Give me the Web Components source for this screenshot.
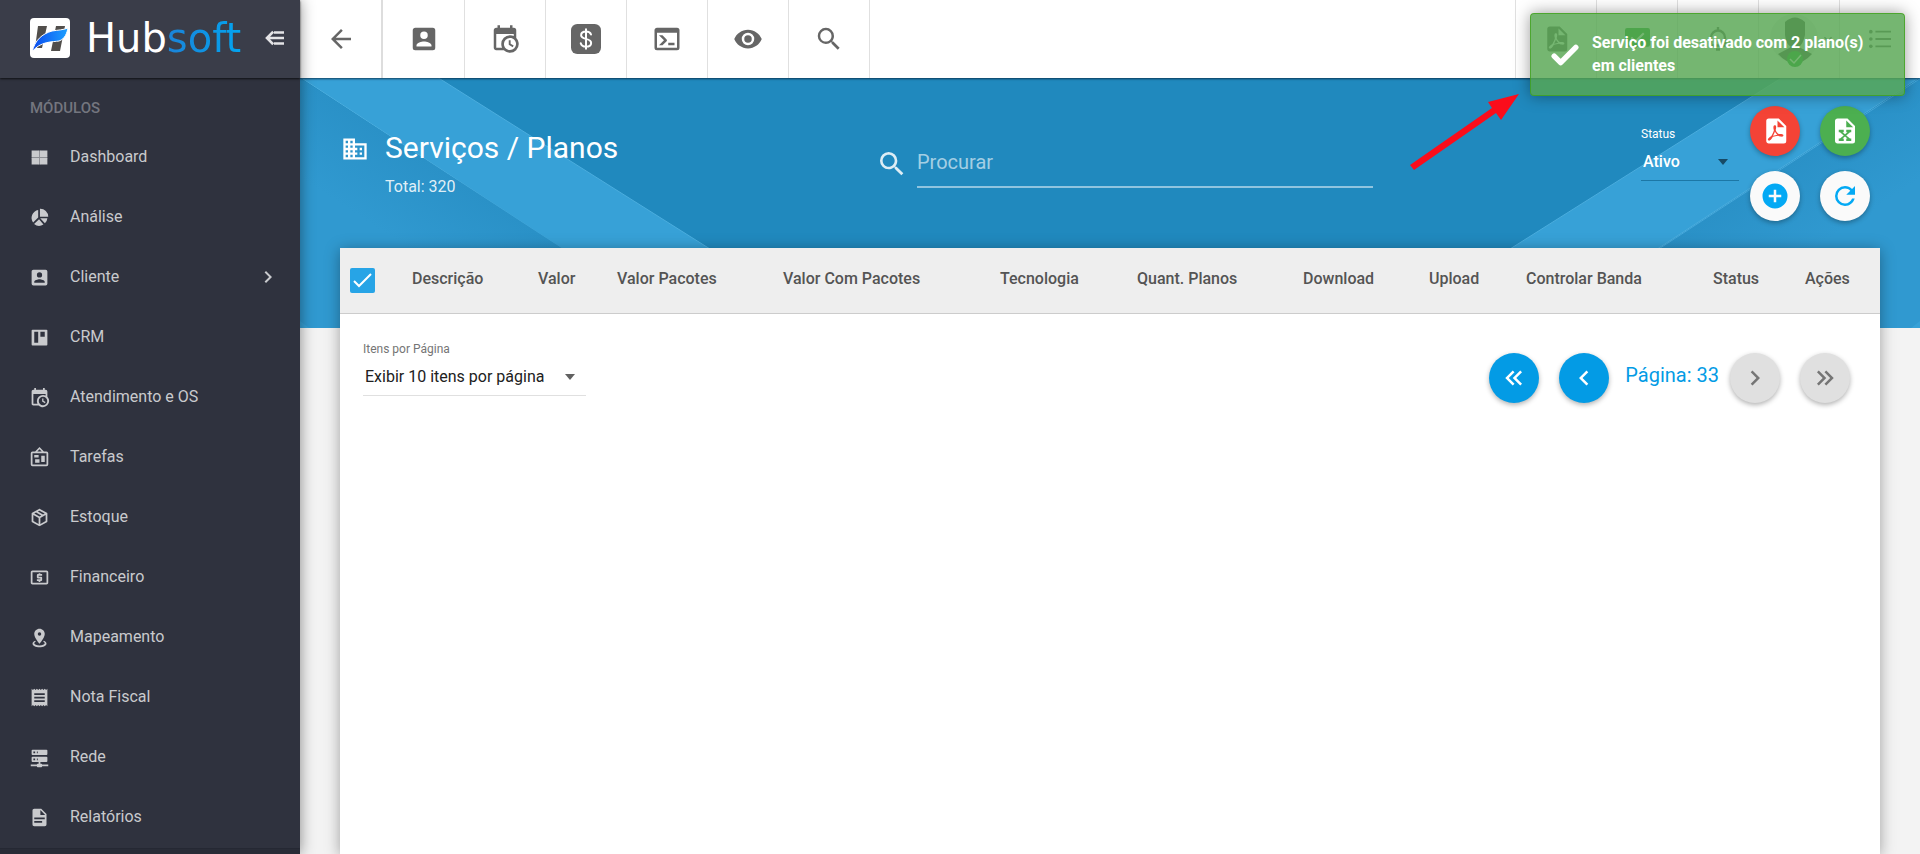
<!DOCTYPE html>
<html lang="pt-BR">
<head>
<meta charset="utf-8">
<title>Hubsoft - Serviços / Planos</title>
<style>
html, body { margin: 0; height: 100%; }
body { font-family: Roboto, "Liberation Sans", sans-serif; font-size: 16px; line-height: 24px; background: #f3f3f3; color: #212121; overflow: hidden; }
</style>
</head>
<body>
<hs-app></hs-app>
<script>
const ICONS = {
  grid: '<path d="M3 4h8.500v7.500H3zM12.500 4H21v7.500h-8.500zM3 12.500h8.500V20H3zM12.500 12.500H21V20h-8.500z"/><path opacity=".6" d="M11 4h2v16h-2zM3 11h18v2H3z"/>',
  pie: '<path d="M10.500 3.500V12l-5.800 5.800A9 9 0 0 1 10.500 3.500zM12.500 2A9 9 0 0 1 22 11h-9.500zM12.800 12.800H21a9 9 0 0 1-2.800 5.800zM11.500 14l5 6a9 9 0 0 1-10.700-.6z"/>',
  account: '<path d="M6,17C6,15 10,13.9 12,13.9C14,13.9 18,15 18,17V18H6M15,9A3,3 0 0,1 12,12A3,3 0 0,1 9,9A3,3 0 0,1 12,6A3,3 0 0,1 15,9M3,5V19A2,2 0 0,0 5,21H19A2,2 0 0,0 21,19V5A2,2 0 0,0 19,3H5C3.89,3 3,3.9 3,5Z"/>',
  board: '<path fill-rule="evenodd" d="M4 3h16a1 1 0 0 1 1 1v16a1 1 0 0 1-1 1H4a1 1 0 0 1-1-1V4a1 1 0 0 1 1-1zM6 5.500v12.500h4.500V5.500zM13 5.500V11h5V5.500z"/>',
  calendar: '<path d="M15,13H16.5V15.82L18.94,17.23L18.19,18.53L15,16.69V13M19,8H5V19H9.67C9.24,18.09 9,17.07 9,16A7,7 0 0,1 16,9C17.07,9 18.09,9.24 19,9.67V8M5,21C3.89,21 3,20.1 3,19V5C3,3.89 3.89,3 5,3H6V1H8V3H16V1H18V3H19A2,2 0 0,1 21,5V11.1C22.24,12.36 23,14.09 23,16A7,7 0 0,1 16,23C14.09,23 12.36,22.24 11.1,21H5M16,11.15A4.85,4.85 0 0,0 11.15,16C11.15,18.68 13.32,20.85 16,20.85A4.85,4.85 0 0,0 20.85,16C20.85,13.32 18.68,11.15 16,11.15Z"/>',
  bulletin: '<path d="M12.04,2.5L9.53,5H14.53L12.04,2.5M4,7V20H20V7H4M12,0L17,5V5H20A2,2 0 0,1 22,7V20A2,2 0 0,1 20,22H4A2,2 0 0,1 2,20V7A2,2 0 0,1 4,5H7V5L12,0M7,18V14H12V18H7M14,17V10H18V17H14M6,12V9H11V12H6Z"/>',
  box: '<path d="M21,16.5C21,16.88 20.79,17.21 20.47,17.38L12.57,21.82C12.41,21.94 12.21,22 12,22C11.79,22 11.59,21.94 11.43,21.82L3.53,17.38C3.21,17.21 3,16.88 3,16.5V7.5C3,7.12 3.21,6.79 3.53,6.62L11.43,2.18C11.59,2.06 11.79,2 12,2C12.21,2 12.41,2.06 12.57,2.18L20.47,6.62C20.79,6.79 21,7.12 21,7.5V16.5M12,4.15L10.11,5.22L16,8.61L17.96,7.5L12,4.15M6.04,7.5L12,10.85L13.96,9.75L8.08,6.35L6.04,7.5M5,15.91L11,19.29V12.58L5,9.21V15.91M19,15.91V9.21L13,12.58V19.29L19,15.91Z"/>',
  atm: '<path d="M11 17h2v-1h1c.55 0 1-.45 1-1v-3c0-.55-.45-1-1-1h-3v-1h4V8h-2V7h-2v1h-1c-.55 0-1 .45-1 1v3c0 .55.45 1 1 1h3v1H9v2h2v1zM20 4H4c-1.110 0-2 .89-2 2v12c0 1.110.89 2 2 2h16c1.110 0 2-.89 2-2V6c0-1.110-.89-2-2-2zm0 14H4V6h16v12z"/>',
  marker: '<path d="M12,2C15.31,2 18,4.66 18,7.95C18,12.41 12,19 12,19C12,19 6,12.41 6,7.95C6,4.66 8.69,2 12,2M12,6A2,2 0 0,0 10,8A2,2 0 0,0 12,10A2,2 0 0,0 14,8A2,2 0 0,0 12,6M20,19C20,21.21 16.42,23 12,23C7.58,23 4,21.21 4,19C4,17.71 5.22,16.56 7.11,15.83L7.75,16.74C6.67,17.19 6,17.81 6,18.5C6,19.88 8.69,21 12,21C15.31,21 18,19.88 18,18.5C18,17.81 17.33,17.19 16.25,16.74L16.89,15.83C18.78,16.56 20,17.71 20,19Z"/>',
  receipt: '<path d="M18 17H6v-2h12v2zm0-4H6v-2h12v2zm0-4H6V7h12v2zM3 22l1.500-1.500L6 22l1.500-1.500L9 22l1.500-1.500L12 22l1.500-1.500L15 22l1.500-1.500L18 22l1.500-1.500L21 22V2l-1.500 1.500L18 2l-1.500 1.500L15 2l-1.500 1.500L12 2l-1.500 1.500L9 2 7.500 3.500 6 2 4.500 3.500 3 2v20z"/>',
  server: '<path d="M13,19H14A1,1 0 0,1 15,20H22V22H15A1,1 0 0,1 14,23H10A1,1 0 0,1 9,22H2V20H9A1,1 0 0,1 10,19H11V17H4A1,1 0 0,1 3,16V12A1,1 0 0,1 4,11H20A1,1 0 0,1 21,12V16A1,1 0 0,1 20,17H13V19M4,3H20A1,1 0 0,1 21,4V8A1,1 0 0,1 20,9H4A1,1 0 0,1 3,8V4A1,1 0 0,1 4,3M9,7H10V5H9V7M9,15H10V13H9V15M5,5V7H7V5H5M5,13V15H7V13H5Z"/>',
  document: '<path d="M13,9H18.5L13,3.5V9M6,2H14L20,8V20A2,2 0 0,1 18,22H6C4.89,22 4,21.1 4,20V4C4,2.89 4.89,2 6,2M15,18V16H6V18H15M18,14V12H6V14H18Z"/>',
  pdf: '<path d="M14,9H19.5L14,3.5V9M7,2H15L21,8V20A2,2 0 0,1 19,22H7C5.89,22 5,21.1 5,20V4A2,2 0 0,1 7,2M11.93,12.44C12.34,13.34 12.86,14.08 13.46,14.59L13.87,14.91C13,15.07 11.8,15.35 10.53,15.84V15.84L10.42,15.88L10.92,14.84C11.37,13.97 11.7,13.18 11.93,12.44M18.41,16.25C18.59,16.07 18.68,15.84 18.69,15.59C18.72,15.39 18.67,15.2 18.57,15.04C18.28,14.57 17.53,14.35 16.29,14.35L15,14.42L14.13,13.84C13.5,13.32 12.93,12.41 12.53,11.28L12.57,11.14C12.9,9.81 13.21,8.2 12.55,7.54C12.39,7.38 12.17,7.3 11.94,7.3H11.7C11.33,7.3 11,7.69 10.91,8.07C10.54,9.4 10.76,10.13 11.13,11.34V11.35C10.88,12.23 10.56,13.25 10.05,14.28L9.09,16.08L8.2,16.57C7,17.32 6.43,18.16 6.32,18.69C6.28,18.88 6.3,19.05 6.37,19.23L6.4,19.28L6.88,19.59L7.32,19.7C8.13,19.7 9.05,18.75 10.29,16.63L10.47,16.56C11.5,16.23 12.78,16 14.5,15.81C15.53,16.32 16.74,16.55 17.5,16.55C17.94,16.55 18.24,16.44 18.41,16.25Z"/>',
  excel: '<path d="M13,9H18.5L13,3.5V9M6,2H14L20,8V20A2,2 0 0,1 18,22H6C4.89,22 4,21.1 4,20V4C4,2.89 4.89,2 6,2M17,11H13V13H14L12,14.67L10,13H11V11H7V13H8L11,15.5L8,18H7V20H11V18H10L12,16.33L14,18H13V20H17V18H16L13,15.5L16,13H17V11Z"/>',
  console: '<path d="M20,19V7H4V19H20M20,3A2,2 0 0,1 22,5V19A2,2 0 0,1 20,21H4A2,2 0 0,1 2,19V5C2,3.89 2.9,3 4,3H20M13,17V15H18V17H13M9.58,13L5.57,9H8.4L11.7,12.3C12.09,12.69 12.09,13.33 11.7,13.72L8.42,17H5.59L9.58,13Z"/>',
  eye: '<path d="M12,9A3,3 0 0,0 9,12A3,3 0 0,0 12,15A3,3 0 0,0 15,12A3,3 0 0,0 12,9M12,17A5,5 0 0,1 7,12A5,5 0 0,1 12,7A5,5 0 0,1 17,12A5,5 0 0,1 12,17M12,4.5C7,4.5 2.73,7.61 1,12C2.73,16.39 7,19.5 12,19.5C17,19.5 21.27,16.39 23,12C21.27,7.61 17,4.5 12,4.5Z"/>',
  search: '<path d="M9.5,3A6.5,6.5 0 0,1 16,9.5C16,11.11 15.41,12.59 14.44,13.73L14.71,14H15.5L20.5,19L19,20.5L14,15.5V14.71L13.73,14.44C12.59,15.41 11.11,16 9.5,16A6.5,6.5 0 0,1 3,9.5A6.5,6.5 0 0,1 9.5,3M9.5,5C7,5 5,7 5,9.5C5,12 7,14 9.5,14C12,14 14,12 14,9.5C14,7 12,5 9.5,5Z"/>',
  back: '<path d="M20 11H7.830l5.590-5.590L12 4l-8 8 8 8 1.410-1.410L7.830 13H20v-2z"/>',
  dollar: '<rect width="24" height="24" rx="5"/><path fill="none" stroke="#fff" stroke-width="1.600" stroke-linecap="round" d="M12 4.200v15.600M16 8.400C15.500 6.800 14 6 12 6c-2.300 0-3.900 1.100-3.900 2.900 0 4 8 2 8 6.200 0 1.800-1.700 3-4.100 3-2.300 0-3.800-1-4.200-2.700"/>',
  domain: '<path d="M18,15H16V17H18M18,11H16V13H18M20,19H12V17H14V15H12V13H14V11H12V9H20M10,7H8V5H10M10,11H8V9H10M10,15H8V13H10M10,19H8V17H10M6,7H4V5H6M6,11H4V9H6M6,15H4V13H6M6,19H4V17H6M12,7V3H2V21H22V7H12Z"/>',
  plus: '<path d="M17,13H13V17H11V13H7V11H11V7H13V11H17M12,2A10,10 0 0,0 2,12A10,10 0 0,0 12,22A10,10 0 0,0 22,12A10,10 0 0,0 12,2Z"/>',
  refresh: '<path d="M17.65,6.35C16.2,4.9 14.21,4 12,4A8,8 0 0,0 4,12A8,8 0 0,0 12,20C15.73,20 18.84,17.45 19.73,14H17.65C16.83,16.33 14.61,18 12,18A6,6 0 0,1 6,12A6,6 0 0,1 12,6C13.66,6 15.14,6.69 16.22,7.78L13,11H20V4L17.65,6.35Z"/>',
  right: '<path d="M8.59,16.58L13.17,12L8.59,7.41L10,6L16,12L10,18L8.59,16.58Z"/>',
  left: '<path d="M15.41,16.58L10.83,12L15.41,7.41L14,6L8,12L14,18L15.41,16.58Z"/>',
  first: '<path d="M18.41,7.41L17,6L11,12L17,18L18.41,16.59L13.83,12L18.41,7.41M12.41,7.41L11,6L5,12L11,18L12.41,16.59L7.83,12L12.41,7.41Z"/>',
  last: '<path d="M5.59,7.41L7,6L13,12L7,18L5.59,16.59L10.17,12L5.59,7.41M11.59,7.41L13,6L19,12L13,18L11.59,16.59L16.17,12L11.59,7.41Z"/>',
  down: '<path d="M7.41,8.58L12,13.17L16.59,8.58L18,10L12,16L6,10L7.41,8.58Z"/>',
  collapse: '<path fill="none" stroke="currentColor" stroke-width="3" d="M11 4.500L3.500 12l7.500 7.500M4 12h20M12 5.500h12M12 18.500h12"/>',
  bell: '<path fill="none" stroke="currentColor" stroke-width="2.400" d="M5 17V10.500a7 7 0 0 1 14 0V17M3 18.500h18M12 0v4M10 22.500h4"/>',
  message: '<path fill="#23a32c" d="M2 1h20a2 2 0 0 1 2 2v14a2 2 0 0 1-2 2H12l-4 4v-4H2a2 2 0 0 1-2-2V3a2 2 0 0 1 2-2z"/><path fill="none" stroke="#fff" stroke-width="2" d="M6 10l4 4 8-8"/>',
  list: '<path d="M7 3h17v2H7zM7 11h17v2H7zM7 19h17v2H7z"/><circle cx="2" cy="4" r="2"/><circle cx="2" cy="12" r="2"/><circle cx="2" cy="20" r="2"/>',
  check: '<path fill="none" stroke="currentColor" stroke-width="5" stroke-linecap="round" stroke-linejoin="round" d="M2 13l6 6L22 5"/>'
};

const define = (name, template) => customElements.define(name, class extends HTMLElement {
  constructor() {
    super();
    this.attachShadow({ mode: 'open' }).innerHTML = typeof template === 'function' ? template(this) : template;
  }
});

define('hs-icon', el => `
<style>:host{display:block;width:var(--size,24px);height:var(--size,24px);flex:none}svg{display:block;width:100%;height:100%;overflow:visible;fill:currentColor}</style>
<svg viewBox="0 0 24 24" aria-hidden="true">${ICONS[el.getAttribute('name')]}</svg>`);

define('hs-logo', `
<style>
:host{display:flex;align-items:center;height:40px}
svg{width:40px;height:40px;flex:none;margin-right:16px}
span{font:40px/40px "DejaVu Sans",sans-serif;color:#fff;white-space:nowrap}
b{font-weight:400;background:linear-gradient(90deg,#1b83d8,#03a4ef);-webkit-background-clip:text;color:transparent}
</style>
<svg viewBox="0 0 40 40" aria-hidden="true">
<defs><linearGradient id="g"><stop stop-color="#0a48ee"/><stop offset="1" stop-color="#1ca0ff"/></linearGradient></defs>
<rect width="40" height="40" rx="4" fill="#fff"/>
<path fill="#514e4b" d="M8 8h9l-5 22H5zM26 8h9l-5 25h-9z"/>
<path fill="url(#g)" stroke="#fff" d="M2 34C5 22 12 16 22 13c6-1 11-1 16-3-1 5-3 11-9 13-6 1-19 0-27 11z"/>
</svg><span>Hub<b>soft</b></span>`);

define('hs-nav-item', el => `
<style>
:host{display:block}
a{display:flex;align-items:center;box-sizing:border-box;height:60px;padding:0 20px 2px 29px;color:#c9cacd;text-decoration:none}
hs-icon{--size:21px;margin-right:20px}
span{flex:1}
.more{--size:24px;margin:0}
</style>
<a href="#"><hs-icon name="${el.getAttribute('icon')}"></hs-icon><span><slot></slot></span>${el.hasAttribute('more') ? '<hs-icon class="more" name="right"></hs-icon>' : ''}</a>`);

define('hs-sidebar', `
<style>
:host{display:flex;flex-direction:column;width:300px;flex:none;background:#2f323e;position:relative;z-index:3;box-shadow:0 0 14px rgba(0,0,0,.45)}
header{display:flex;align-items:center;box-sizing:border-box;height:78px;flex:none;padding:0 16px 2px 30px;background:#3a3d49;box-shadow:0 1px 2px rgba(0,0,0,.7)}
button{border:0;background:none;padding:0;margin-left:auto;color:#e4e4e6}
button hs-icon{--size:20px}
h2{margin:0;padding:19px 30px 9px;font-size:15px;line-height:22px;font-weight:500;color:#74767f}
nav{display:flex;flex-direction:column}
footer{flex:1;background:#292c37;border-top:1px solid #252833}
</style>
<header><hs-logo></hs-logo><button aria-label="Recolher menu"><hs-icon name="collapse"></hs-icon></button></header>
<h2>MÓDULOS</h2>
<nav>
<hs-nav-item icon="grid">Dashboard</hs-nav-item>
<hs-nav-item icon="pie">Análise</hs-nav-item>
<hs-nav-item icon="account" more>Cliente</hs-nav-item>
<hs-nav-item icon="board">CRM</hs-nav-item>
<hs-nav-item icon="calendar">Atendimento e OS</hs-nav-item>
<hs-nav-item icon="bulletin">Tarefas</hs-nav-item>
<hs-nav-item icon="box">Estoque</hs-nav-item>
<hs-nav-item icon="atm">Financeiro</hs-nav-item>
<hs-nav-item icon="marker">Mapeamento</hs-nav-item>
<hs-nav-item icon="receipt">Nota Fiscal</hs-nav-item>
<hs-nav-item icon="server">Rede</hs-nav-item>
<hs-nav-item icon="document">Relatórios</hs-nav-item>
</nav>
<footer></footer>`);

define('hs-tool', el => `
<style>
:host{display:block;width:81px;flex:none;box-sizing:border-box;border-left:1px solid #e0e0e0}
button{display:flex;align-items:center;justify-content:center;width:100%;height:100%;padding:0;border:0;background:none;color:#666}
hs-icon{--size:${el.getAttribute('size') || 30}px}
</style>
<button aria-label="${el.getAttribute('label')}"><slot><hs-icon name="${el.getAttribute('icon')}"></hs-icon></slot></button>`);

define('hs-avatar', `
<style>
:host{display:flex;align-items:center;gap:2px;padding-left:8px}
svg{width:48px;height:56px;flex:none}
hs-icon{--size:16px}
</style>
<svg viewBox="0 0 48 56" aria-hidden="true"><circle cx="24" cy="27" r="24" fill="#eee"/><path fill="#555" d="M15 11q10-9 20 0v13q-2 9-6 12l13 7q-8 9-17 9T8 43l13-7q-5-3-6-12z"/><circle cx="25" cy="48" r="8" fill="#1fa52c"/><path fill="none" stroke="#fff" stroke-width="1.500" d="M20 48l4 4 7-8"/></svg>
<hs-icon name="down"></hs-icon>`);

define('hs-toolbar', `
<style>
:host{display:flex;height:78px;flex:none;background:#fff;position:relative;z-index:1;box-shadow:0 1px 2px rgba(0,20,40,.7)}
.back{border:0;border-right:2px solid #ddd;width:83px}
.first{border:0}
.gap{flex:1;border-left:1px solid #e0e0e0}
</style>
<hs-tool class="back" icon="back" label="Voltar"></hs-tool>
<hs-tool class="first" icon="account" label="Clientes"></hs-tool>
<hs-tool icon="calendar" label="Agenda"></hs-tool>
<hs-tool icon="dollar" label="Financeiro"></hs-tool>
<hs-tool icon="console" label="Terminal"></hs-tool>
<hs-tool icon="eye" label="Monitor"></hs-tool>
<hs-tool icon="search" label="Buscar"></hs-tool>
<div class="gap"></div>
<hs-tool icon="pdf" label="Relatórios"></hs-tool>
<hs-tool icon="message" size="25" label="Mensagens"></hs-tool>
<hs-tool icon="bell" size="24" label="Notificações"></hs-tool>
<hs-tool label="Usuário"><hs-avatar></hs-avatar></hs-tool>
<hs-tool icon="list" size="22" label="Menu"></hs-tool>`);

define('hs-fab', el => `
<style>
:host{display:block}
button{display:flex;align-items:center;justify-content:center;width:50px;height:50px;padding:0;border:0;border-radius:50%;background:var(--fab,#fafafa);color:var(--ink,#03a9f4);box-shadow:0 2px 5px rgba(0,0,0,.3)}
hs-icon{--size:30px}
</style>
<button aria-label="${el.getAttribute('label')}" ${el.hasAttribute('disabled') ? 'disabled' : ''}><hs-icon name="${el.getAttribute('icon')}"></hs-icon></button>`);

define('hs-select', el => `
<style>
:host{display:flex;flex-direction:column}
label{font-size:12px;line-height:16px;color:var(--label,#757575)}
div{display:grid;align-items:center;height:36px;padding-top:2px;border-bottom:1px solid var(--line,#e0e0e0)}
select{grid-area:1/1;appearance:none;width:100%;border:0;padding:0 2px;background:none;font:var(--weight,400) 16px/24px Roboto,sans-serif;color:var(--ink,#212121)}
i{grid-area:1/1;justify-self:end;margin-right:11px;border:5px solid transparent;border-top:6px solid var(--caret,#616161);border-bottom:0;pointer-events:none}
option{color:#212121}
</style>
<label for="s">${el.getAttribute('label')}</label>
<div><select id="s"><option>${el.getAttribute('value')}</option></select><i></i></div>`);

define('hs-page-header', `
<style>
:host{display:grid;grid-template-columns:540fr 493fr 497fr;height:170px;padding:0 50px 0 40px;color:#fff}
.title{display:flex;padding-top:51px}
.title hs-icon{--size:28px;margin:6px 16px 0 1px}
h1{margin:0;font-size:30px;line-height:38px;font-weight:400}
p{margin:0;padding-top:8px;color:rgba(255,255,255,.87)}
.search{display:flex;height:50px;padding-top:60px}
.search hs-icon{--size:32px;margin:10px 9px 0 -4px;color:rgba(255,255,255,.85)}
input{flex:1;min-width:0;box-sizing:border-box;height:50px;padding:0;border:0;border-bottom:2px solid rgba(255,255,255,.5);background:none;outline:0;font:20px/24px Roboto,sans-serif;color:#fff}
input::placeholder{color:rgba(255,255,255,.6);opacity:1}
.actions{display:flex;justify-content:flex-end;padding-top:28px}
hs-select{--label:#fff;--ink:#fff;--weight:500;--caret:#174a66;--line:#1c77a6;width:98px;padding-top:20px;margin-right:11px}
.fabs{display:grid;grid-template-columns:50px 50px;gap:15px 20px;align-content:start}
</style>
<div class="title"><hs-icon name="domain"></hs-icon><div><h1>Serviços / Planos</h1><p>Total: 320</p></div></div>
<div class="search"><hs-icon name="search"></hs-icon><input type="text" placeholder="Procurar" aria-label="Procurar"></div>
<div class="actions"><hs-select label="Status" value="Ativo"></hs-select>
<div class="fabs">
<hs-fab icon="pdf" label="Exportar PDF" style="--fab:#f44336;--ink:#fff"></hs-fab>
<hs-fab icon="excel" label="Exportar Excel" style="--fab:#4caf50;--ink:#fff"></hs-fab>
<hs-fab icon="plus" label="Adicionar"></hs-fab>
<hs-fab icon="refresh" label="Atualizar"></hs-fab>
</div></div>`);

const COLUMNS = [['Descrição', 126], ['Valor', 79], ['Valor Pacotes', 166], ['Valor Com Pacotes', 217], ['Tecnologia', 137], ['Quant. Planos', 166], ['Download', 126], ['Upload', 97], ['Controlar Banda', 187], ['Status', 92], ['Ações', 75]];
define('hs-table', `
<style>
:host{display:block}
table{width:100%;table-layout:fixed;border-collapse:collapse;background:#eee}
tr{height:65px;border-bottom:1px solid #ccc}
th{padding:0 0 2px;text-align:left;font-weight:500;color:#545454;white-space:nowrap}
th:first-child{padding:1px 0 0 10px;line-height:0}
input{appearance:none;margin:0;width:25px;height:25px;border-radius:2px;background:#27a4e6}
input:checked{background:#27a4e6 url("data:image/svg+xml,%3Csvg xmlns='http://www.w3.org/2000/svg' viewBox='0 0 25 25'%3E%3Cpath d='M4 13l5 5L21 6' fill='none' stroke='white' stroke-width='2'/%3E%3C/svg%3E")}
</style>
<table><colgroup><col style="width:72px">${COLUMNS.map(c => `<col style="width:${c[1]}px">`).join('')}</colgroup>
<thead><tr><th><input type="checkbox" checked aria-label="Selecionar todos"></th>${COLUMNS.map(c => `<th scope="col">${c[0]}</th>`).join('')}</tr></thead></table>`);

define('hs-pagination', `
<style>
:host{display:flex;justify-content:space-between;padding:27px 30px 0 23px}
hs-select{width:223px}
nav{display:flex;padding-top:12px}
hs-fab{--fab:#039be5;--ink:#fff}
hs-fab[disabled]{--fab:#e0e0e0;--ink:#757575}
hs-fab + hs-fab{margin-left:20px}
span{padding:10px 11px 0 16px;font-size:20px;line-height:24px;color:#039be5}
</style>
<hs-select label="Itens por Página" value="Exibir 10 itens por página"></hs-select>
<nav aria-label="Paginação"><hs-fab icon="first" label="Primeira"></hs-fab><hs-fab icon="left" label="Anterior"></hs-fab><span>Página: 33</span><hs-fab icon="right" label="Próxima" disabled></hs-fab><hs-fab icon="last" label="Última" disabled></hs-fab></nav>`);

define('hs-backdrop', `
<style>:host{display:block;position:absolute;inset:0 0 auto;height:250px;background:#2089be}svg{display:block;width:100%;height:100%}</style>
<svg viewBox="0 0 1620 250" preserveAspectRatio="none" aria-hidden="true">
<defs>
<linearGradient id="a" x1="0" y1="1" x2="1" y2="0"><stop offset=".3" stop-color="#3099d0"/><stop offset=".5" stop-color="#2a91c7"/></linearGradient>
<linearGradient id="c" x1="1" y1="1" x2="0" y2="0"><stop offset=".3" stop-color="#3099d0"/><stop offset=".5" stop-color="#2a91c7"/></linearGradient></defs>
<path fill="#37a1d7" stroke="#4badde" d="M0-1h137l400 252H385z"/><path fill="url(#a)" d="M0 0l385 250H0z"/>
<path fill="#37a1d7" stroke="#4badde" d="M1620-1h-137l-400 252h152z"/><path fill="url(#c)" stroke="#47a9dc" d="M1621 0l-385 251h385z"/>
<path fill="#37a1d7" d="M0 243l9 7H0zM1620 243l-9 7h9z"/>
</svg>`);

define('hs-toast', `
<style>
:host{display:flex;position:absolute;top:13px;right:15px;z-index:10;box-sizing:border-box;width:375px;height:83px;padding:17px 20px;border:1px solid rgba(60,160,20,.7);border-radius:4px;background:rgba(87,166,82,.82);box-shadow:0 0 16px rgba(0,0,0,.4);color:#fff;font-weight:700;line-height:23px}
hs-icon{--size:26px;margin:11px 14px 0 1px}
</style>
<hs-icon name="check"></hs-icon><div role="status"><slot></slot></div>`);

define('hs-arrow', `
<style>:host{display:block;position:absolute;top:94px;right:400px;width:110px;height:76px;z-index:9}svg{display:block}</style>
<svg width="110" height="76" viewBox="0 0 110 76" aria-hidden="true"><path fill="#fb0d1b" d="M109 0L91 26l-5-7L4 76l-4-5L82 14l-4-6z"/></svg>`);

define('hs-app', `
<style>
:host{display:flex;min-height:100vh;position:relative}
main{display:flex;flex-direction:column;flex:1;min-width:0}
section{display:flex;flex-direction:column;flex:1;position:relative;isolation:isolate}
hs-backdrop{z-index:-1}
.card{flex:1;margin:0 40px;background:#fff;box-shadow:0 2px 14px rgba(0,0,0,.35)}
</style>
<hs-sidebar></hs-sidebar>
<main><hs-toolbar></hs-toolbar>
<section><hs-backdrop></hs-backdrop><hs-page-header></hs-page-header>
<div class="card"><hs-table></hs-table><hs-pagination></hs-pagination></div></section></main>
<hs-arrow></hs-arrow>
<hs-toast>Serviço foi desativado com 2 plano(s) em clientes</hs-toast>`);
</script>
</body>
</html>
